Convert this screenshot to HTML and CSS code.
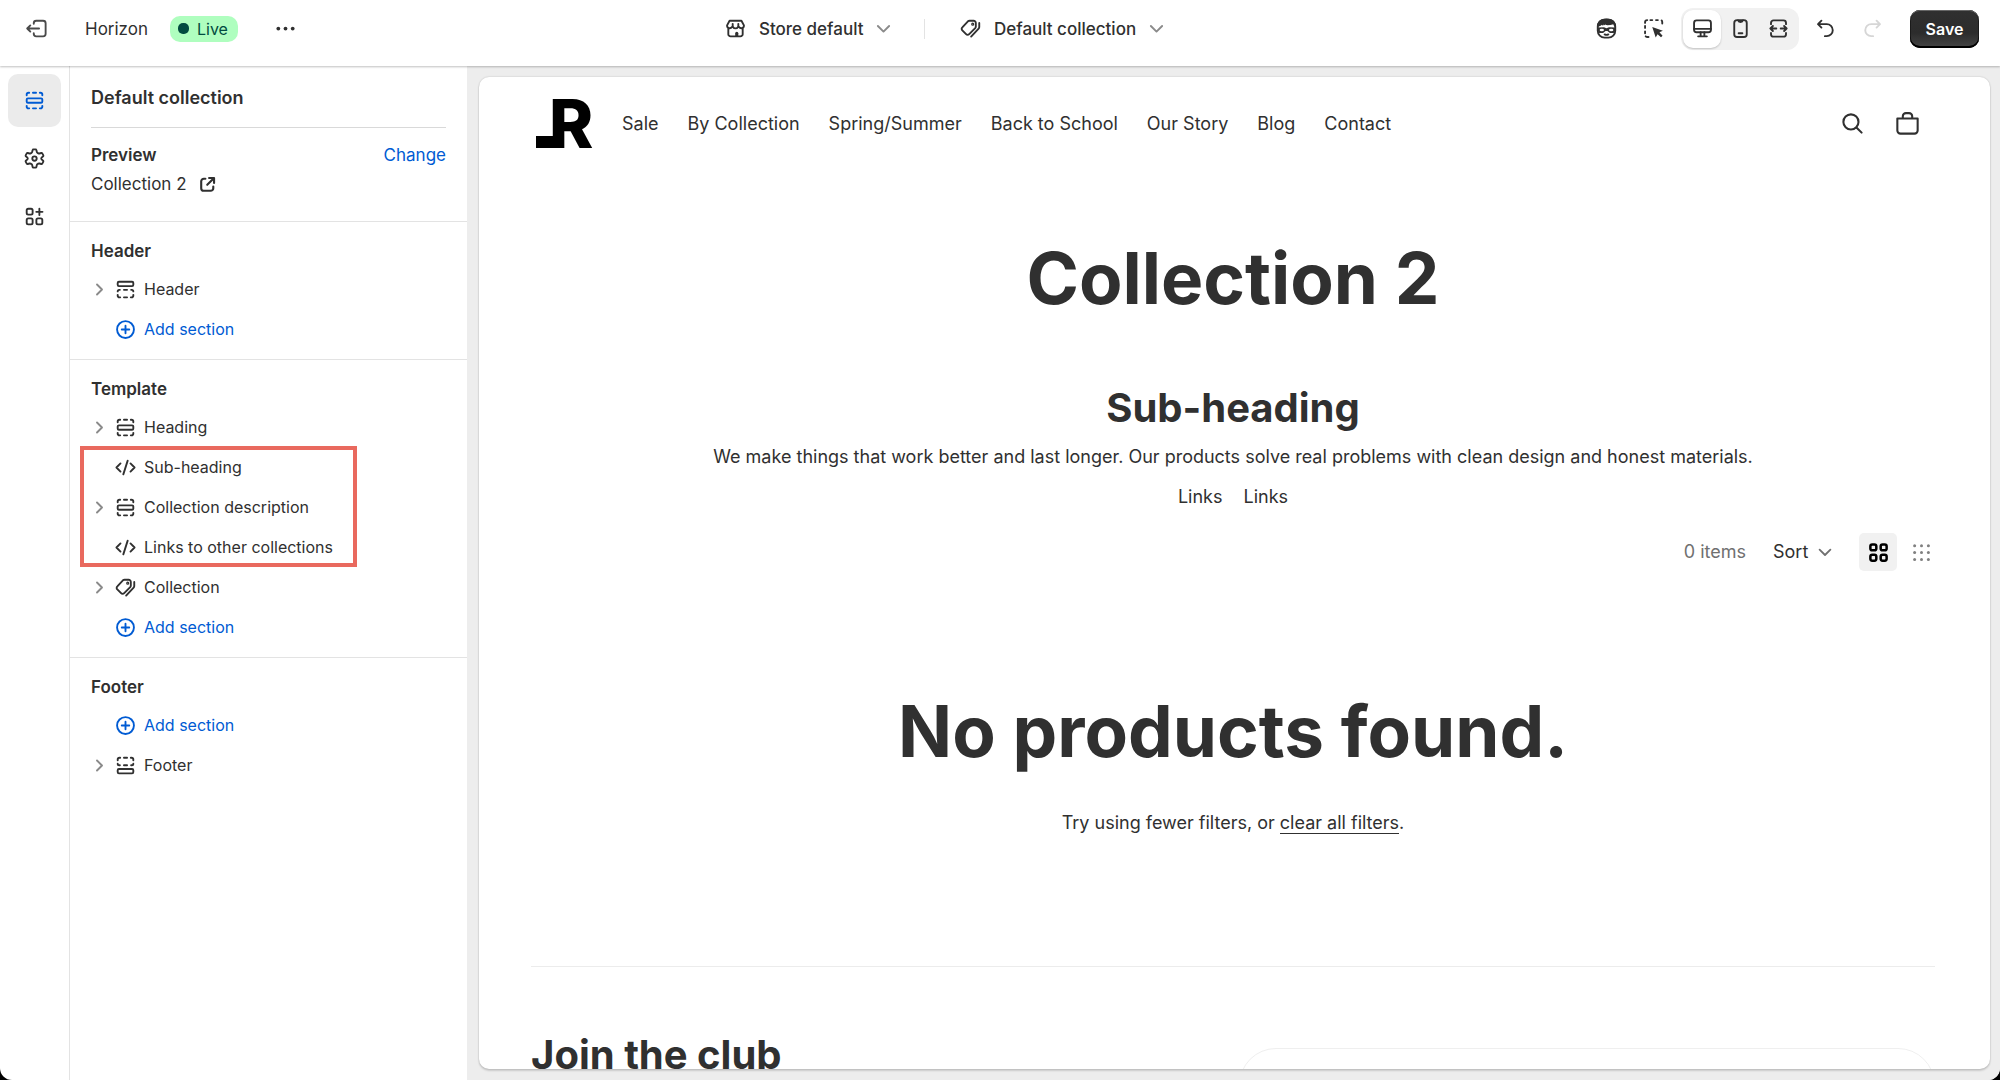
FILE: index.html
```html
<!DOCTYPE html>
<html lang="en">
<head>
    <meta charset="UTF-8">
    <meta name="viewport" content="width=device-width, initial-scale=1.0">
    <title>Horizon - Default collection</title>
    <link rel="stylesheet" href="styles.css">
</head>
<body>
    <!-- shared icons -->
    <svg class="sprite" aria-hidden="true">
        <symbol id="i-section" viewBox="0 0 20 20">
            <rect x="3.75" y="8.25" width="12.5" height="3.5" rx="1"/>
            <path d="M3.75 5.75v-.5a1.5 1.5 0 0 1 1.5-1.5h.5M8.75 3.75h2.5M14.25 3.75h.5a1.5 1.5 0 0 1 1.5 1.5v.5M3.75 14.25v.5a1.5 1.5 0 0 0 1.5 1.5h.5M8.75 16.25h2.5M14.25 16.25h.5a1.5 1.5 0 0 0 1.5-1.5v-.5"/>
        </symbol>
        <symbol id="i-header" viewBox="0 0 20 20">
            <rect x="3.75" y="3.75" width="12.5" height="3.5" rx="1"/>
            <path d="M3.75 11.5a1.25 1.25 0 0 1 1.25-1.25h.5M8.75 10.25h2.5M14.5 10.25h.5a1.25 1.25 0 0 1 1.25 1.25M3.75 14.25v.5a1.5 1.5 0 0 0 1.5 1.5h.5M8.75 16.25h2.5M14.25 16.25h.5a1.5 1.5 0 0 0 1.5-1.5v-.5"/>
        </symbol>
        <symbol id="i-footer" viewBox="0 0 20 20">
            <rect x="3.75" y="12.75" width="12.5" height="3.5" rx="1"/>
            <path d="M3.75 8.5a1.25 1.25 0 0 0 1.25 1.25h.5M8.75 9.75h2.5M14.5 9.75h.5a1.25 1.25 0 0 0 1.25-1.25M3.75 5.75v-.5a1.5 1.5 0 0 1 1.5-1.5h.5M8.75 3.75h2.5M14.25 3.75h.5a1.5 1.5 0 0 1 1.5 1.5v.5"/>
        </symbol>
        <symbol id="i-code" viewBox="0 0 20 20">
            <path d="M6 6.75 2.75 10 6 13.25M14 6.75 17.25 10 14 13.25M11.75 4.5l-3.5 11"/>
        </symbol>
        <symbol id="i-collection" viewBox="0 0 20 20">
            <path d="M9.2 3.75h3.3a1.75 1.75 0 0 1 1.75 1.75v2.9c0 .5-.2.9-.5 1.25l-4.8 4.9a1.75 1.75 0 0 1-2.5 0l-3-3a1.75 1.75 0 0 1 0-2.5l4.5-4.8c.35-.3.75-.5 1.25-.5Z"/>
            <path d="M17 5.5v3.3c0 .5-.2 1-.5 1.3l-6 6.4"/>
            <circle cx="11.75" cy="6.5" r=".5"/>
        </symbol>
        <symbol id="i-plus" viewBox="0 0 20 20">
            <circle cx="10" cy="10" r="6.75"/>
            <path d="M10 7v6M7 10h6"/>
        </symbol>
        <symbol id="i-right" viewBox="0 0 20 20">
            <path d="m8 6 4 4-4 4"/>
        </symbol>
        <symbol id="i-down" viewBox="0 0 20 20">
            <path d="m5.5 8 4.5 4.5L14.5 8"/>
        </symbol>
    </svg>

    <div class="app">
        <header class="topbar">
            <div class="topbar-left">
                <button class="icon-btn exit" type="button" aria-label="Exit">
                    <svg class="icon" viewBox="0 0 20 20"><path d="M7 6.25v-.5a2 2 0 0 1 2-2h5.5a2 2 0 0 1 2 2v8.5a2 2 0 0 1-2 2H9a2 2 0 0 1-2-2v-.5M11.25 10H1.75M4.25 7.5 1.75 10l2.5 2.5"/></svg>
                </button>
                <span class="theme-name">Horizon</span>
                <span class="badge">Live</span>
                <button class="icon-btn more" type="button" aria-label="More actions">
                    <svg class="icon solid" viewBox="0 0 20 20"><circle cx="4.25" cy="10" r="1.5"/><circle cx="10" cy="10" r="1.5"/><circle cx="15.75" cy="10" r="1.5"/></svg>
                </button>
            </div>

            <div class="topbar-center">
                <label class="picker">
                    <svg class="icon" viewBox="0 0 20 20"><path d="M4.25 10v4.5a1.75 1.75 0 0 0 1.75 1.75h8a1.75 1.75 0 0 0 1.75-1.75V10M5.25 3.75h9.5L16.75 7.5c0 2.75-3.25 3-4.5.75-1 2.25-3.5 2.25-4.5 0-1.25 2.25-4.5 2-4.5-.75ZM7.75 6.25v2M12.25 6.25v2"/><path class="solid" d="M9.75 16v-2.25a1.25 1.25 0 0 1 2.5 0V16Z"/></svg>
                    <select aria-label="Market"><option>Store default</option></select>
                    <svg class="icon chevron"><use href="#i-down"/></svg>
                </label>
                <span class="divider"></span>
                <label class="picker">
                    <svg class="icon"><use href="#i-collection"/></svg>
                    <select aria-label="Template"><option>Default collection</option></select>
                    <svg class="icon chevron"><use href="#i-down"/></svg>
                </label>
            </div>

            <div class="topbar-right">
                <button class="icon-btn" type="button" aria-label="Sidekick">
                    <svg class="icon" viewBox="0 0 20 20"><rect x="3" y="3" width="14" height="14.25" rx="5.5"/><path class="solid" d="M2.5 8.75C2.25 4.25 5.5 2 10 2s7.75 2.25 7.5 6.75c-1.25-.25-1.75-1-2-2.25-2 .75-4.25 1-6.25.75l.25-.75-1.75 1-.25-.75-1 1-.25-.75c-.75.75-1.75 1.5-3.75 1.75Z"/><path class="solid" d="M3 9.25 8 9l2 .75L12 9l5 .25v2.5l-1.25 1.75h-3L10.75 12h-1.5L7.25 13.5h-3L3 11.75Z"/><ellipse class="lens" cx="6.25" cy="11.25" rx="1.75" ry="1"/><ellipse class="lens" cx="13.75" cy="11.25" rx="1.75" ry="1"/><path d="M8.5 14.75c1 .5 2 .5 3 0"/></svg>
                </button>
                <button class="icon-btn" type="button" aria-label="Inspector">
                    <svg class="icon" viewBox="0 0 20 20"><path d="M3.25 5.5V5A1.75 1.75 0 0 1 5 3.25M7.5 3.25H9M12 3.25h1.5M16.5 3.5c.25.25.5.75.5 1.5v1M3.25 8v1.5M3.25 12.25v1.5M3.75 16.25c.25.25.75.5 1.5.5h.75"/><path class="solid" d="m9 8.75 8.5 3-2.75 1.25 2.5 2.75-1.25 1.25-2.75-2.5L11.75 17.25Z"/></svg>
                </button>
                <div class="segment">
                    <button class="segment-btn active" type="button" aria-label="Desktop">
                        <svg class="icon" viewBox="0 0 20 20"><rect x="3.25" y="3.5" width="13.5" height="9.5" rx="2"/><path d="M3.25 10.25h13.5M8.5 13v3M11.5 13v3M6.5 16.25h7"/></svg>
                    </button>
                    <button class="segment-btn" type="button" aria-label="Mobile">
                        <svg class="icon" viewBox="0 0 20 20"><rect x="5" y="3.25" width="10" height="13.5" rx="2.25"/><path d="M8 3.5c.25 1 .75 1.25 2 1.25s1.75-.25 2-1.25M8.5 13.75h3"/></svg>
                    </button>
                    <button class="segment-btn" type="button" aria-label="Fullscreen">
                        <svg class="icon" viewBox="0 0 20 20"><path d="M4 6.5v-1a2 2 0 0 1 2-2h8a2 2 0 0 1 2 2v1M4 13.5v1a2 2 0 0 0 2 2h8a2 2 0 0 0 2-2v-1M3.5 10h4.75M11.75 10h4.75M5.5 8l-2 2 2 2M14.5 8l2 2-2 2"/></svg>
                    </button>
                </div>
                <button class="icon-btn undo" type="button" aria-label="Undo">
                    <svg class="icon" viewBox="0 0 20 20"><path d="M6.75 3.75 4 6.5l2.75 2.75M4.25 6.5H11a4.8 4.8 0 0 1 0 9.6H9.5"/></svg>
                </button>
                <button class="icon-btn redo" type="button" aria-label="Redo" disabled>
                    <svg class="icon" viewBox="0 0 20 20"><path d="M13.25 3.75 16 6.5l-2.75 2.75M15.75 6.5H9a4.8 4.8 0 0 0 0 9.6h1.5"/></svg>
                </button>
                <button class="save" type="button">Save</button>
            </div>
        </header>

        <div class="workspace">
            <nav class="rail" aria-label="Editor">
                <button class="rail-btn active" type="button" aria-label="Sections">
                    <svg class="icon"><use href="#i-section"/></svg>
                </button>
                <button class="rail-btn" type="button" aria-label="Theme settings">
                    <svg class="icon" viewBox="0 0 20 20"><path d="M8.5 3.2Q8.600 2.700 9.100 2.700h1.800q.5 0 .6.5l.4 1.700q.1.400.5.600l.7.400q.4.200.8.100l1.500-.4q.500-.1.800.3l.8 1.400q.300.500-.1.900l-1.200 1.100q-.3.300-.3.700t.3.700l1.200 1.100q.4.400.1.900l-.8 1.400q-.3.400-.8.300l-1.500-.4q-.4-.1-.8.100l-.7.400q-.4.200-.5.600l-.4 1.700q-.1.500-.6.500H9.100q-.5 0-.6-.5l-.4-1.700q-.1-.4-.5-.6l-.7-.4q-.4-.2-.8-.1l-1.500.4q-.5.100-.8-.3L3 12.700q-.3-.5.1-.9l1.200-1.100q.3-.3.300-.7t-.3-.7L3.100 8.200q-.4-.4-.1-.9l.8-1.400q.3-.4.800-.3l1.500.4q.4.100.8-.1l.7-.4q.4-.2.500-.6Z"/><circle cx="10" cy="10" r="1.75"/></svg>
                </button>
                <button class="rail-btn" type="button" aria-label="App embeds">
                    <svg class="icon" viewBox="0 0 20 20"><rect x="3.75" y="3.75" width="4.75" height="4.75" rx="1.25"/><rect x="3.75" y="11.5" width="4.75" height="4.75" rx="1.25"/><rect x="11.5" y="11.5" width="4.75" height="4.75" rx="1.25"/><path d="M13.9 3.75v5M11.4 6.25h5"/></svg>
                </button>
            </nav>

            <aside class="sidebar">
                <div class="intro">
                    <h1 class="sidebar-title">Default collection</h1>
                    <div class="preview-row">
                        <h2 class="group-title">Preview</h2>
                        <button class="change" type="button">Change</button>
                    </div>
                    <a class="preview-link" href="#">
                        Collection 2
                        <svg class="icon small" viewBox="0 0 20 20"><path d="M8 4.5H6.5A2.5 2.5 0 0 0 4 7v6.5A2.5 2.5 0 0 0 6.5 16H13a2.5 2.5 0 0 0 2.5-2.5V12M11.5 3.75h4.75V8.5M16 4l-6.25 6.25"/></svg>
                    </a>
                </div>

                <section class="group">
                    <h2 class="group-title">Header</h2>
                    <button class="row" type="button"><svg class="icon arrow"><use href="#i-right"/></svg><svg class="icon"><use href="#i-header"/></svg>Header</button>
                    <button class="row add" type="button"><svg class="icon"><use href="#i-plus"/></svg>Add section</button>
                </section>

                <section class="group">
                    <h2 class="group-title">Template</h2>
                    <button class="row" type="button"><svg class="icon arrow"><use href="#i-right"/></svg><svg class="icon"><use href="#i-section"/></svg>Heading</button>
                    <div class="marked">
                        <button class="row leaf" type="button"><svg class="icon"><use href="#i-code"/></svg>Sub-heading</button>
                        <button class="row" type="button"><svg class="icon arrow"><use href="#i-right"/></svg><svg class="icon"><use href="#i-section"/></svg>Collection description</button>
                        <button class="row leaf" type="button"><svg class="icon"><use href="#i-code"/></svg>Links to other collections</button>
                    </div>
                    <button class="row" type="button"><svg class="icon arrow"><use href="#i-right"/></svg><svg class="icon"><use href="#i-collection"/></svg>Collection</button>
                    <button class="row add" type="button"><svg class="icon"><use href="#i-plus"/></svg>Add section</button>
                </section>

                <section class="group">
                    <h2 class="group-title">Footer</h2>
                    <button class="row add" type="button"><svg class="icon"><use href="#i-plus"/></svg>Add section</button>
                    <button class="row" type="button"><svg class="icon arrow"><use href="#i-right"/></svg><svg class="icon"><use href="#i-footer"/></svg>Footer</button>
                </section>
            </aside>

            <main class="canvas">
                <div class="store">
                    <div class="store-header">
                        <a class="logo" href="#" aria-label="Home">
                            <svg viewBox="0 0 60 50"><text x="13" y="49">R</text><rect x="0" y="37" width="24" height="12"/></svg>
                        </a>
                        <nav class="store-nav">
                            <a href="#">Sale</a>
                            <a href="#">By Collection</a>
                            <a href="#">Spring/Summer</a>
                            <a href="#">Back to School</a>
                            <a href="#">Our Story</a>
                            <a href="#">Blog</a>
                            <a href="#">Contact</a>
                        </nav>
                        <div class="store-actions">
                            <button class="icon-btn" type="button" aria-label="Search">
                                <svg class="icon" viewBox="0 0 24 24"><circle cx="10.5" cy="10.5" r="7.25"/><path d="m16 16 4.75 4.75"/></svg>
                            </button>
                            <button class="icon-btn" type="button" aria-label="Cart">
                                <svg class="icon" viewBox="0 0 24 24"><path d="M2.25 7.25h19.5v11.5a3 3 0 0 1-3 3H5.25a3 3 0 0 1-3-3ZM7.5 7.25V5a3 3 0 0 1 3-3h3a3 3 0 0 1 3 3v2.25"/></svg>
                            </button>
                        </div>
                    </div>

                    <h1 class="display">Collection 2</h1>
                    <h2 class="subheading">Sub-heading</h2>
                    <p class="description">We make things that work better and last longer. Our products solve real problems with clean design and honest materials.</p>
                    <div class="links">
                        <a href="#">Links</a>
                        <a href="#">Links</a>
                    </div>

                    <div class="toolbar">
                        <span class="count">0 items</span>
                        <label class="sort">
                            <select aria-label="Sort"><option>Sort</option></select>
                            <svg class="icon"><use href="#i-down"/></svg>
                        </label>
                        <button class="view active" type="button" aria-label="Large grid">
                            <svg class="icon" viewBox="0 0 20 20"><rect x="3.5" y="3.5" width="4.75" height="4.75" rx="1.5"/><rect x="11.75" y="3.5" width="4.75" height="4.75" rx="1.5"/><rect x="3.5" y="11.75" width="4.75" height="4.75" rx="1.5"/><rect x="11.75" y="11.75" width="4.75" height="4.75" rx="1.5"/></svg>
                        </button>
                        <button class="view dense" type="button" aria-label="Small grid">
                            <svg class="icon solid" viewBox="0 0 20 20"><circle cx="4.5" cy="4.5" r="1.2"/><circle cx="10" cy="4.5" r="1.2"/><circle cx="15.5" cy="4.5" r="1.2"/><circle cx="4.5" cy="10" r="1.2"/><circle cx="10" cy="10" r="1.2"/><circle cx="15.5" cy="10" r="1.2"/><circle cx="4.5" cy="15.5" r="1.2"/><circle cx="10" cy="15.5" r="1.2"/><circle cx="15.5" cy="15.5" r="1.2"/></svg>
                        </button>
                    </div>

                    <div class="empty">
                        <h2 class="display">No products found.</h2>
                        <p>Try using fewer filters, or <a href="#">clear all filters</a>.</p>
                    </div>

                    <div class="signup">
                        <h2 class="subheading">Join the club</h2>
                        <input class="email" type="email" aria-label="Email address">
                    </div>
                </div>
            </main>
        </div>
    </div>
</body>
</html>
```
FILE: styles.css
```css
* {
    margin: 0;
    padding: 0;
    box-sizing: border-box;
}

body {
    height: 100vh;
    overflow: hidden;
    background-color: #000;
    color: #303030;
    font-family: Inter, "Liberation Sans", sans-serif;
    font-size: 17px;
    line-height: 24px;
}

button,
select,
input {
    border: none;
    background: none;
    color: inherit;
    font: inherit;
}

button {
    cursor: pointer;
}

select {
    appearance: none;
}

a {
    color: inherit;
    text-decoration: none;
}

.sprite {
    display: none;
}

.icon {
    flex: none;
    width: 25px;
    height: 25px;
    fill: none;
    stroke: currentColor;
    stroke-width: 1.5;
    stroke-linecap: round;
    stroke-linejoin: round;
}

.solid {
    fill: currentColor;
    stroke: none;
}

.lens {
    fill: #fff;
    stroke: none;
}

.app {
    display: flex;
    flex-direction: column;
    height: 100%;
    overflow: hidden;
    background-color: #fff;
    border-radius: 0 0 12px 12px;
}

/* top bar */
.topbar {
    position: relative;
    z-index: 1;
    display: flex;
    align-items: center;
    justify-content: space-between;
    flex: none;
    height: 66px;
    padding: 0 21px 9px 25px;
    box-shadow: 0 1px 2px rgba(0, 0, 0, 0.25);
}

.topbar-left,
.topbar-center,
.topbar-right,
.picker {
    display: flex;
    align-items: center;
}

.icon-btn {
    display: flex;
}

.exit {
    color: #4a4a4a;
}

.theme-name {
    margin-left: 35px;
}

.badge {
    display: flex;
    align-items: center;
    gap: 8px;
    height: 26px;
    margin-left: 22px;
    padding: 0 10px 0 8px;
    border-radius: 10px;
    background-color: #affebf;
    color: #014b40;
    font-size: 16px;
}

.badge::before {
    content: "";
    width: 11px;
    height: 11px;
    border-radius: 5px;
    background-color: #014b40;
}

.more {
    margin-left: 35px;
}

.picker {
    font-weight: 500;
}

.picker select {
    margin-left: 11px;
}

.picker .chevron {
    margin-left: 7px;
    color: #8a8a8a;
}

.divider {
    width: 1px;
    height: 20px;
    margin: 0 33px 0 28px;
    background-color: #e3e3e3;
}

.topbar-right > .icon-btn + .icon-btn {
    margin-left: 22px;
}

.segment {
    display: flex;
    margin-left: 15px;
    padding: 2px;
    border-radius: 12px;
    background-color: #f1f1f1;
}

.segment-btn {
    display: flex;
    align-items: center;
    justify-content: center;
    width: 38px;
    height: 38px;
    border-radius: 10px;
}

.segment-btn.active {
    background-color: #fff;
    box-shadow: 0 1px 2px rgba(0, 0, 0, 0.2);
}

.undo {
    margin-left: 14px;
}

.redo {
    color: #d6d6d6;
}

.save {
    width: 69px;
    height: 38px;
    margin-left: 25px;
    border-radius: 10px;
    background-image: linear-gradient(#303030, #2c2c2c 60%, #454545);
    box-shadow: inset 0 -2px 0 #000, inset 0 1px 0 #666, inset 0 0 0 1px #1a1a1a;
    color: #fff;
    font-size: 16px;
    font-weight: 600;
}

/* editor columns */
.workspace {
    display: flex;
    flex: 1;
    min-height: 0;
}

.rail {
    display: flex;
    flex-direction: column;
    align-items: center;
    gap: 5px;
    flex: none;
    width: 70px;
    padding: 8px 1px 0 0;
    border-right: 1px solid #e3e3e3;
}

.rail-btn {
    display: flex;
    align-items: center;
    justify-content: center;
    width: 53px;
    height: 53px;
    border-radius: 10px;
}

.rail-btn.active {
    background-color: #ebebeb;
    color: #005bd3;
}

.sidebar {
    flex: none;
    width: 397px;
}

.intro {
    height: 156px;
    padding: 16px 21px 0;
    border-bottom: 1px solid #e3e3e3;
}

.sidebar-title {
    height: 46px;
    padding-top: 4px;
    border-bottom: 1px solid #d9d9d9;
    font-size: 18px;
    font-weight: 600;
}

.preview-row {
    display: flex;
    justify-content: space-between;
    margin-top: 15px;
}

.group-title {
    font-size: 17px;
    font-weight: 600;
}

.change {
    color: #005bd3;
}

.preview-link {
    display: flex;
    align-items: center;
    gap: 10px;
    margin-top: 5px;
}

.icon.small {
    width: 21px;
    height: 21px;
    stroke-width: 2;
}

.group {
    padding: 17px 10px 10px;
    border-bottom: 1px solid #e3e3e3;
}

.group:last-child {
    border-bottom: none;
}

.group .group-title {
    margin: 0 0 6px 11px;
}

.row {
    display: flex;
    align-items: center;
    width: 100%;
    height: 40px;
    padding-left: 7px;
    font-size: 16px;
    text-align: left;
}

.row .icon {
    margin-right: 6px;
}

.row .arrow {
    margin-right: 1px;
    color: #8a8a8a;
}

.row.leaf,
.row.add {
    padding-left: 33px;
}

.row.add {
    color: #005bd3;
}

/* callout frame drawn around the custom blocks */
.marked {
    position: relative;
    width: 277px;
}

.marked::after {
    content: "";
    position: absolute;
    inset: -1px 0 0;
    border: 4px solid #e9695e;
    pointer-events: none;
}

.canvas {
    flex: 1;
    min-width: 0;
    padding: 11px 10px 11px 12px;
    background-color: #ededed;
}

/* storefront preview */
.store {
    height: 100%;
    overflow: hidden;
    padding: 0 55px 0 52px;
    border-radius: 10px;
    background-color: #fff;
    box-shadow: 0 2px 2px rgba(0, 0, 0, 0.14), 0 0 2px rgba(0, 0, 0, 0.2);
    font-size: 18px;
}

.store-header {
    display: flex;
    align-items: center;
    height: 93px;
    padding: 0 15px 0 5px;
}

.logo svg {
    display: block;
    width: 60px;
    height: 50px;
    fill: #000;
    font-size: 67px;
    font-weight: 800;
}

.store-nav {
    display: flex;
    gap: 29px;
    margin-left: 26px;
}

.store-actions {
    display: flex;
    gap: 30px;
    margin-left: auto;
}

.store-actions .icon {
    stroke-width: 2;
}

.display {
    font-size: 71px;
    font-weight: 700;
    line-height: 90px;
    text-align: center;
}

.store > .display {
    margin-top: 63px;
}

.subheading {
    font-size: 40px;
    font-weight: 700;
    line-height: 50px;
}

.store > .subheading {
    margin-top: 60px;
    text-align: center;
}

.description {
    margin-top: 12px;
    text-align: center;
}

.links {
    display: flex;
    justify-content: center;
    gap: 21px;
    margin-top: 16px;
}

.toolbar {
    display: flex;
    align-items: center;
    justify-content: flex-end;
    height: 38px;
    margin-top: 24px;
}

.count {
    color: #707070;
}

.sort {
    display: flex;
    align-items: center;
    margin: 0 22px 0 27px;
}

.sort .icon {
    width: 24px;
    height: 24px;
    margin-left: 4px;
    color: #707070;
}

.view {
    display: flex;
    align-items: center;
    justify-content: center;
    width: 28px;
    height: 38px;
    border-radius: 5px;
}

.view.active {
    width: 38px;
    margin-right: 10px;
    background-color: #f1f1f1;
    color: #000;
}

.view.active .icon {
    stroke-width: 2;
}

.view.dense {
    color: #808080;
}

.empty {
    padding: 115px 0 131px;
    border-bottom: 1px solid #ececec;
    text-align: center;
}

.empty p {
    margin-top: 35px;
}

.empty a {
    border-bottom: 1px solid #303030;
}

.signup {
    display: grid;
    grid-template-columns: 1fr 1fr;
    align-items: start;
    gap: 11px;
    padding-top: 63px;
}

.email {
    height: 74px;
    margin-top: 18px;
    border: 1px solid #efefef;
    border-radius: 37px;
}
```
